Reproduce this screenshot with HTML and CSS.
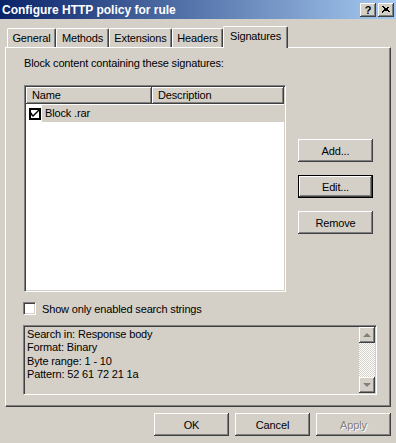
FILE: index.html
```html
<!DOCTYPE html>
<html lang="en">
<head>
    <meta charset="UTF-8">
    <meta name="viewport" content="width=device-width, initial-scale=1.0">
    <title>Configure HTTP policy for rule</title>
    <link rel="stylesheet" href="styles.css">
</head>
<body>
    <div class="dialog">
        <!-- Title bar -->
        <div class="titlebar">
            <span class="title">Configure HTTP policy for rule</span>
            <div class="title-buttons">
                <span class="title-btn help">?</span>
                <span class="title-btn">
                    <svg width="8" height="7" viewBox="0 0 8 7">
                        <path d="M0.5 0.5 L7.5 6.5 M1.5 0.5 L8.5 6.5 M7.5 0.5 L0.5 6.5 M6.5 0.5 L-0.5 6.5" stroke="#000" stroke-width="1" fill="none" shape-rendering="crispEdges"/>
                    </svg>
                </span>
            </div>
        </div>

        <!-- Tabs -->
        <div class="tabs">
            <div class="tab tab-general">General</div>
            <div class="tab tab-methods">Methods</div>
            <div class="tab tab-extensions">Extensions</div>
            <div class="tab tab-headers">Headers</div>
            <div class="tab tab-signatures active">Signatures</div>
        </div>

        <div class="panel">
            <p class="caption">Block content containing these signatures:</p>

            <div class="list-row">
                <div class="listview">
                    <div class="list-header">
                        <div class="col col-name">Name</div>
                        <div class="col col-desc">Description</div>
                    </div>
                    <div class="list-item">
                        <span class="state-check">
                            <svg width="8" height="7" viewBox="0 0 8 7">
                                <path d="M0 2 L0 5 L2 7 L8 1 L8 -1 L2 5 Z" fill="#000"/>
                            </svg>
                        </span>
                        <span class="item-text">Block .rar</span>
                    </div>
                </div>

                <div class="side-buttons">
                    <button class="btn">Add...</button>
                    <button class="btn default">Edit...</button>
                    <button class="btn">Remove</button>
                </div>
            </div>

            <label class="check-row">
                <span class="checkbox"></span>
                <span>Show only enabled search strings</span>
            </label>

            <!-- Signature details -->
            <div class="details">
                <div class="details-text">
                    <div>Search in: Response body</div>
                    <div>Format: Binary</div>
                    <div>Byte range: 1 - 10</div>
                    <div>Pattern: 52 61 72 21 1a</div>
                </div>
                <div class="scrollbar">
                    <span class="scroll-btn"><span class="arrow up"></span></span>
                    <span class="scroll-track"></span>
                    <span class="scroll-btn"><span class="arrow down"></span></span>
                </div>
            </div>
        </div>

        <div class="footer">
            <button class="btn">OK</button>
            <button class="btn">Cancel</button>
            <button class="btn" disabled>Apply</button>
        </div>
    </div>
</body>
</html>
```

FILE: styles.css
```css
body {
    margin: 0;
    padding: 0;
    background-color: #d4d0c8;
    font-family: "Liberation Sans", Arial, sans-serif;
    font-size: 11px;
    letter-spacing: -0.15px;
    color: #000;
}
.dialog {
    width: 396px;
    height: 443px;
    overflow: hidden;
}

/* title bar */
.titlebar {
    height: 19px;
    display: flex;
    align-items: center;
    justify-content: space-between;
    padding: 0 2px;
    background: linear-gradient(to right, #0a246a, #a6caf0);
}
.title {
    color: #fff;
    font-weight: bold;
    font-size: 12px;
    letter-spacing: 0;
}
.title-buttons {
    display: flex;
    gap: 2px;
}
.title-btn {
    width: 16px;
    height: 14px;
    display: flex;
    align-items: center;
    justify-content: center;
    background-color: #d4d0c8;
    box-shadow: inset -1px -1px #404040, inset 1px 1px #fff, inset -2px -2px #808080;
    font-weight: bold;
    font-size: 11px;
    line-height: 14px;
}

/* tabs */
.tabs {
    display: flex;
    align-items: flex-end;
    height: 21px;
    margin-top: 7px;
    padding-left: 7px;
}
.tab {
    height: 19px;
    box-sizing: border-box;
    padding-top: 3px;
    text-align: center;
    border-top: 1px solid #fff;
    border-left: 1px solid #fff;
    border-right: 1px solid #404040;
    border-radius: 2px 2px 0 0;
    box-shadow: inset -1px 0 #808080;
    line-height: 13px;
}
.tab-general { width: 49px; }
.tab-methods { width: 53px; }
.tab-extensions { width: 63px; }
.tab-headers { width: 51px; }
.tab-signatures { width: 65px; }
.tab.active {
    height: 22px;
    margin-bottom: -1px;
    background-color: #d4d0c8;
    position: relative;
    z-index: 1;
}

/* tab page */
.panel {
    width: 386px;
    height: 360px;
    margin-left: 5px;
    box-sizing: border-box;
    border-top: 1px solid #fff;
    border-left: 1px solid #fff;
    border-right: 1px solid #404040;
    border-bottom: 1px solid #404040;
    box-shadow: inset -1px -1px #808080;
    padding: 9px 0 0 17px;
}
.caption {
    margin: 0 0 15px 1px;
    line-height: 13px;
}
.list-row {
    display: flex;
}
.listview {
    width: 262px;
    height: 207px;
    margin-left: 1px;
    box-sizing: border-box;
    background-color: #fff;
    border-top: 1px solid #808080;
    border-left: 1px solid #808080;
    border-right: 1px solid #fff;
    border-bottom: 1px solid #fff;
    box-shadow: inset 1px 1px #404040, inset -1px -1px #d4d0c8;
    padding: 1px;
}
.list-header {
    display: flex;
    height: 17px;
}
.col {
    box-sizing: border-box;
    height: 17px;
    padding: 2px 0 0 6px;
    line-height: 13px;
    background-color: #d4d0c8;
    box-shadow: inset -1px -1px #404040, inset 1px 1px #fff, inset -2px -2px #808080;
}
.col-name {
    width: 126px;
}
.col-desc {
    flex: 1;
}
.list-item {
    display: flex;
    align-items: center;
    height: 17px;
    margin-top: 1px;
}
.state-check {
    width: 12px;
    height: 12px;
    margin-left: 3px;
    box-sizing: border-box;
    border: 2px solid #000;
    background-color: #fff;
    display: flex;
    align-items: center;
    justify-content: center;
}
.item-text {
    flex: 1;
    margin-left: 1px;
    height: 17px;
    line-height: 17px;
    padding-left: 3px;
    background-color: #d4d0c8;
}
.side-buttons {
    display: flex;
    flex-direction: column;
    gap: 13px;
    margin-left: 12px;
    padding-top: 54px;
}

/* buttons */
.btn {
    width: 75px;
    height: 23px;
    padding: 0;
    border: none;
    background-color: #d4d0c8;
    box-shadow: inset -1px -1px #404040, inset 1px 1px #fff, inset -2px -2px #808080;
    font-family: inherit;
    font-size: 11px;
    letter-spacing: inherit;
    color: #000;
}
.btn.default {
    border: 1px solid #000;
}
.btn:disabled {
    color: #808080;
    text-shadow: 1px 1px #fff;
}

/* checkbox */
.check-row {
    display: flex;
    align-items: center;
    margin-top: 10px;
    height: 13px;
}
.checkbox {
    width: 13px;
    height: 13px;
    box-sizing: border-box;
    margin-right: 6px;
    background-color: #fff;
    border-top: 1px solid #808080;
    border-left: 1px solid #808080;
    border-right: 1px solid #fff;
    border-bottom: 1px solid #fff;
    box-shadow: inset 1px 1px #404040, inset -1px -1px #d4d0c8;
}

/* details box */
.details {
    display: flex;
    width: 354px;
    height: 70px;
    margin-top: 10px;
    box-sizing: border-box;
    border-top: 1px solid #808080;
    border-left: 1px solid #808080;
    border-right: 1px solid #fff;
    border-bottom: 1px solid #fff;
    box-shadow: inset 1px 1px #404040, inset -1px -1px #d4d0c8;
    padding: 1px;
}
.details-text {
    flex: 1;
    padding: 1px 0 0 2px;
    line-height: 13.4px;
}
.scrollbar {
    width: 16px;
    display: flex;
    flex-direction: column;
}
.scroll-btn {
    height: 16px;
    display: flex;
    align-items: center;
    justify-content: center;
    background-color: #d4d0c8;
    box-shadow: inset -1px -1px #404040, inset 1px 1px #fff, inset -2px -2px #808080;
}
.scroll-track {
    flex: 1;
    background-color: #d4d0c8;
    background-image: repeating-conic-gradient(#fff 0 25%, #d4d0c8 0 50%);
    background-size: 2px 2px;
}
.arrow {
    width: 0;
    height: 0;
    border-left: 4px solid transparent;
    border-right: 4px solid transparent;
}
.arrow.up {
    border-bottom: 4px solid #808080;
}
.arrow.down {
    border-top: 4px solid #808080;
}

.footer {
    display: flex;
    justify-content: flex-end;
    gap: 6px;
    margin-top: 6px;
    padding-right: 5px;
}
```
